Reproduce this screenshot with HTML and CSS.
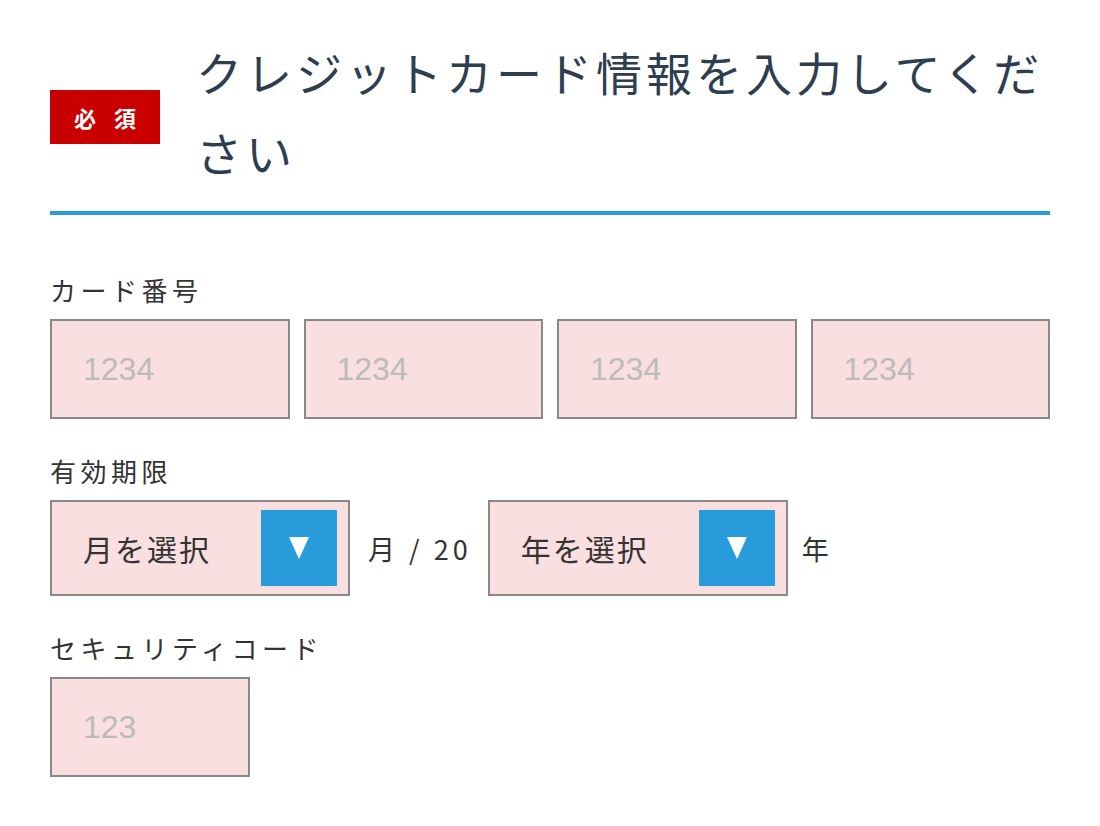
FILE: index.html
```html
<!DOCTYPE html>
<html lang="ja">
<head>
  <meta charset="UTF-8">
  <title>クレジットカード情報</title>
  <link rel="stylesheet" href="styles.css">
</head>
<body>

<div class="container">
  <div class="heading">
    <span class="badge">必須</span>
    <h2>クレジットカード情報を入力してください</h2>
  </div>

  <div class="field">
    <label>カード番号</label>
    <div class="card-row">
      <input type="text" placeholder="1234">
      <input type="text" placeholder="1234">
      <input type="text" placeholder="1234">
      <input type="text" placeholder="1234">
    </div>
  </div>

  <div class="field">
    <label>有効期限</label>
    <div class="expiry-row">
      <div class="select">
        <span class="select-text">月を選択</span>
        <span class="select-btn">
          <svg width="20" height="22" viewBox="0 0 20 22"><polygon points="0,0 20,0 10,22" fill="#fff"/></svg>
        </span>
      </div>
      <span class="unit">月 / 20</span>
      <div class="select">
        <span class="select-text">年を選択</span>
        <span class="select-btn">
          <svg width="20" height="22" viewBox="0 0 20 22"><polygon points="0,0 20,0 10,22" fill="#fff"/></svg>
        </span>
      </div>
      <span class="unit">年</span>
    </div>
  </div>

  <div class="field">
    <label>セキュリティコード</label>
    <input type="text" class="cvc" placeholder="123">
  </div>
</div>

</body>
</html>
```

FILE: styles.css
```css
body {
  margin: 0;
  font-family: "Noto Sans CJK JP", "Noto Sans", sans-serif;
  background: #fff;
  color: #333;
}
.container {
  width: 1000px;
  padding: 31px 50px;
}
.heading {
  display: flex;
  align-items: center;
  gap: 36px;
  padding-bottom: 20px;
  border-bottom: 4px solid #289cdb;
}
.badge {
  flex: none;
  width: 110px;
  height: 54px;
  line-height: 54px;
  margin-top: 12px;
  background: #c80000;
  color: #fff;
  font-size: 22px;
  font-weight: bold;
  text-align: center;
  letter-spacing: 18px;
  text-indent: 18px;
}
h2 {
  margin: 0;
  font-size: 46px;
  font-weight: normal;
  line-height: 80px;
  letter-spacing: 4px;
  color: #2c3e50;
}
.field {
  margin-top: 32px;
}
.heading + .field {
  margin-top: 55px;
}
label {
  display: block;
  font-size: 26px;
  line-height: 40px;
  letter-spacing: 4.5px;
  margin-bottom: 9px;
}
input {
  box-sizing: border-box;
  height: 100px;
  padding: 0 31px;
  border: 2px solid #888;
  background: #fadfe0;
  font-family: "Liberation Sans", Arial, sans-serif;
  font-size: 32px;
  color: #333;
  outline: none;
}
input::placeholder {
  color: #bbb;
}
.card-row {
  display: grid;
  grid-template-columns: repeat(4, 1fr);
  gap: 14px;
}
.card-row input {
  width: 100%;
}
.cvc {
  width: 200px;
}
.expiry-row {
  display: flex;
  align-items: center;
}
.select {
  box-sizing: border-box;
  width: 300px;
  height: 96px;
  border: 2px solid #888;
  background: #fadfe0;
  display: flex;
  align-items: center;
  justify-content: space-between;
  padding: 0 11px 0 31px;
}
.select-text {
  font-size: 30px;
  letter-spacing: 2px;
  color: #333;
}
.select-btn {
  width: 76px;
  height: 76px;
  background: #289cdb;
  display: flex;
  align-items: center;
  justify-content: center;
}
.unit {
  font-size: 27px;
  letter-spacing: 4px;
  margin: 0 16px 0 18px;
}
.unit:last-child {
  margin-left: 14px;
}
```
